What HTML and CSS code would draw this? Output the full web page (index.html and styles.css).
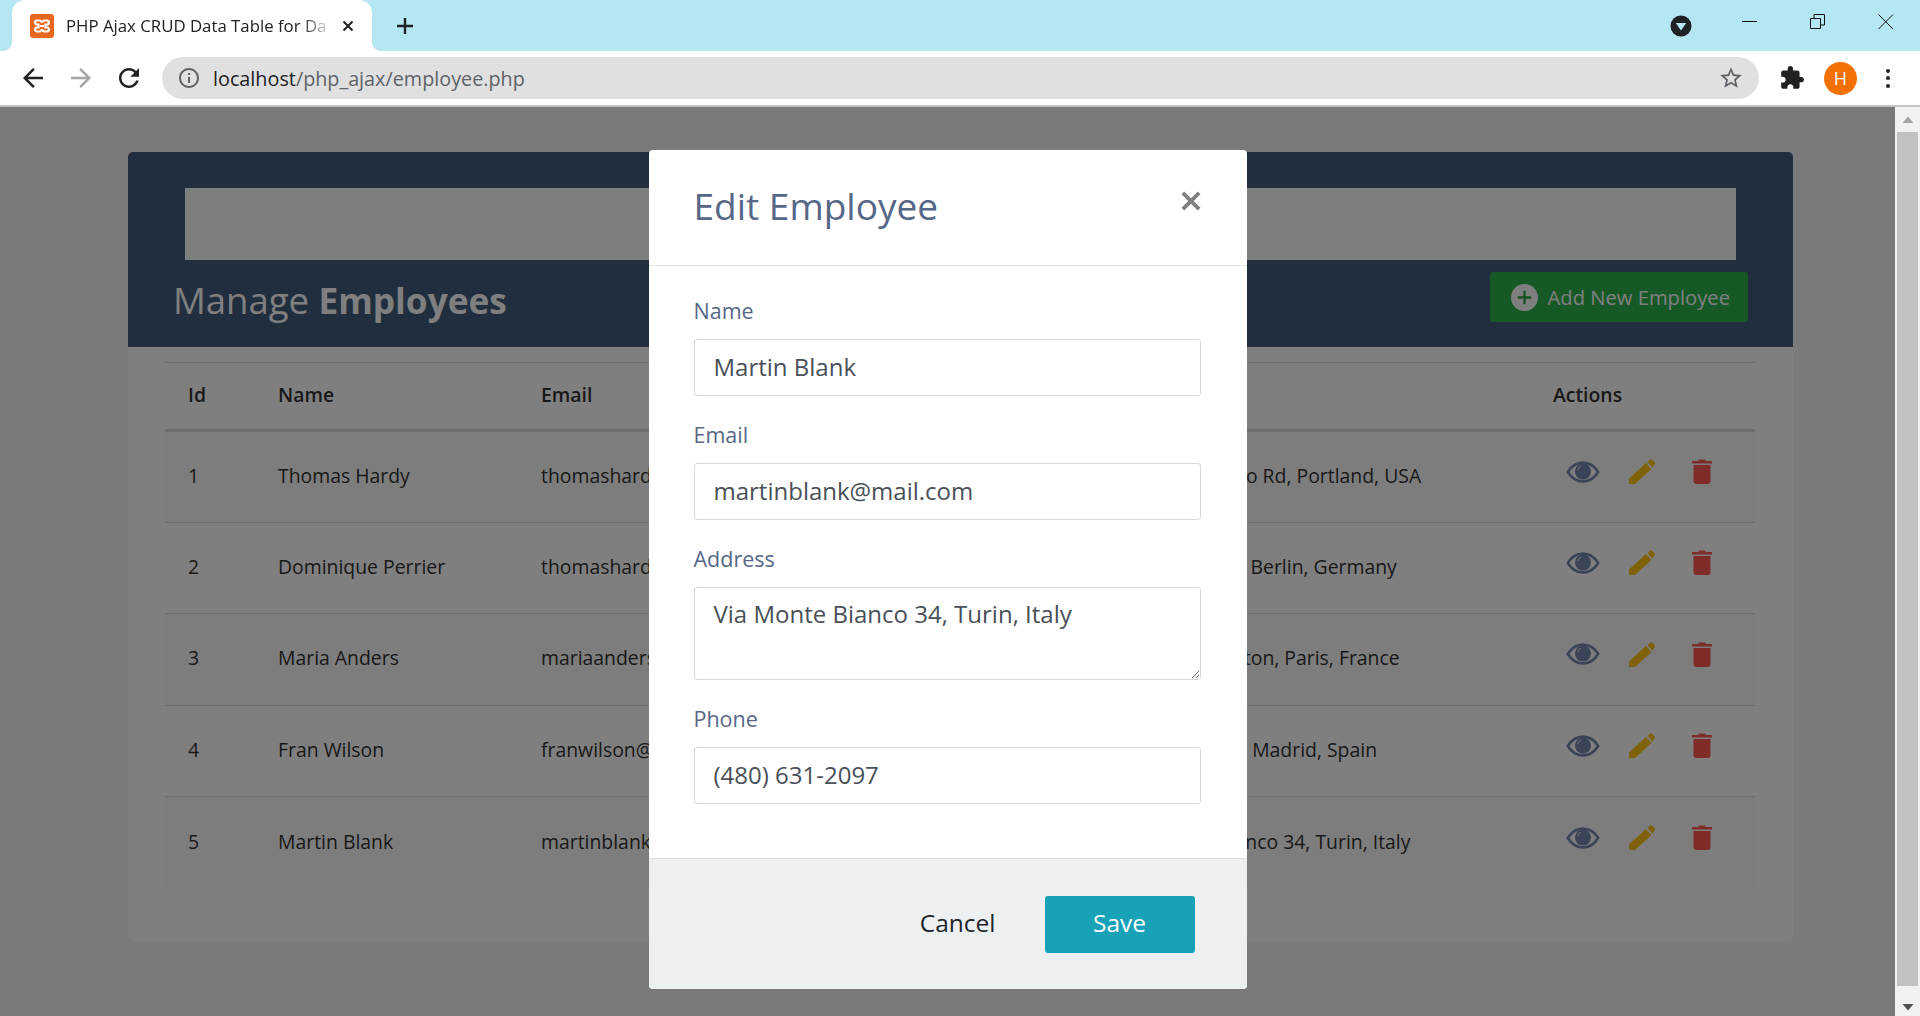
FILE: index.html
```html
<!DOCTYPE html>
<html lang="en">
  <head>
    <meta charset="utf-8" />
    <title>PHP Ajax CRUD Data Table for Database with Modal Form</title>
    <link rel="stylesheet" href="styles.css">
  </head>

  <body>
    <svg class="defs" width="0" height="0">
      <symbol id="i-eye" viewBox="0 0 34 22">
        <path d="M1.8 11C5.5 5 11 1.6 17 1.6S28.500 5 32.200 11C28.500 17 23 20.400 17 20.400S5.500 17 1.800 11Z" fill="none" stroke="currentColor" stroke-width="2.600"/>
        <circle cx="17" cy="10.500" r="8" fill="currentColor"/>
        <path d="M11.800 9.500A5.500 5.500 0 0 1 15.500 5" fill="none" stroke="#ccc" stroke-width="1.200"/>
      </symbol>
      <symbol id="i-pencil" viewBox="0 0 26 25">
        <path d="M0 25V19.500L17 4L22.500 10L6 25Z" fill="currentColor"/>
        <path d="M18.500 3L21 .7C21.800 0 22.600 0 23.300 .7L25.500 3C26.200 3.800 26.200 4.500 25.500 5.300L23.500 8.800Z" fill="currentColor"/>
      </symbol>
      <symbol id="i-trash" viewBox="0 0 20 25">
        <path d="M6.500 2C6.500 .8 7 .4 8 .4H12C13 .4 13.500 .8 13.500 2H20V4.500H0V2Z" fill="currentColor"/>
        <path d="M1.500 6H18.500V22C18.500 23.800 17.500 25 15.500 25H4.500C2.500 25 1.500 23.800 1.500 22Z" fill="currentColor"/>
      </symbol>
    </svg>

    <!-- browser frame -->
    <div class="tabstrip">
      <div class="tab">
        <svg class="favicon" viewBox="0 0 24 24">
          <rect width="24" height="24" rx="3" fill="#e8671f"/>
          <path d="M7 6.500H10C11 6.500 11 8 12 8S13 6.500 14 6.500H17C19.500 6.500 19.500 10.500 17 10.500H15.500V13.500H17C19.500 13.500 19.500 17.500 17 17.500H14C13 17.500 13 16 12 16S11 17.500 10 17.500H7C4.500 17.500 4.500 13.500 7 13.500H8.500V10.500H7C4.500 10.500 4.500 6.500 7 6.500Z" fill="none" stroke="#fff" stroke-width="2.200"/>
          <path d="M10 11H14V13H10Z" fill="#fff"/>
        </svg>
        <span class="tab-title">PHP Ajax CRUD Data Table for Da</span>
        <svg class="tab-close" viewBox="0 0 12 12"><path d="M1.500 1.500L10.500 10.500M10.500 1.500L1.500 10.500" stroke="#202124" stroke-width="2"/></svg>
      </div>
      <svg class="new-tab" viewBox="0 0 18 18"><path d="M9 1V17M1 9H17" stroke="#202124" stroke-width="2.400"/></svg>
      <svg class="tab-search" viewBox="0 0 22 22">
        <circle cx="11" cy="11" r="10.500" fill="#202124"/>
        <path d="M5.800 8H16.200L11 15.500Z" fill="#b5e7f3"/>
      </svg>
      <div class="win-btns">
        <div class="win-btn"><svg width="16" height="16" viewBox="0 0 16 16"><path d="M0 7.500H15" stroke="#111"/></svg></div>
        <div class="win-btn"><svg width="16" height="16" viewBox="0 0 16 16"><path d="M.5 4.500H10.500V14.500H.5ZM4 4.500V.5H14.500V11H10.500" fill="none" stroke="#111"/></svg></div>
        <div class="win-btn"><svg width="16" height="16" viewBox="0 0 16 16"><path d="M.5 .5L15 15M15 .5L.5 15" stroke="#111"/></svg></div>
      </div>
    </div>

    <div class="toolbar">
      <svg class="nav-icon" viewBox="0 0 24 24"><path d="M20 11H7.830l5.590-5.590L12 4l-8 8 8 8 1.410-1.410L7.830 13H20v-2z" fill="#202124"/></svg>
      <svg class="nav-icon flip" viewBox="0 0 24 24"><path d="M20 11H7.830l5.590-5.590L12 4l-8 8 8 8 1.410-1.410L7.830 13H20v-2z" fill="#a5a5a5"/></svg>
      <svg class="nav-icon" viewBox="0 0 24 24"><path d="M17.650 6.350C16.200 4.900 14.210 4 12 4c-4.420 0-7.990 3.580-7.990 8s3.570 8 7.990 8c3.730 0 6.840-2.550 7.730-6h-2.080c-.820 2.330-3.040 4-5.650 4-3.310 0-6-2.690-6-6s2.690-6 6-6c1.660 0 3.140.690 4.220 1.780L13 11h7V4l-2.350 2.350z" fill="#202124"/></svg>
      <div class="omnibox">
        <svg class="info-icon" viewBox="0 0 24 24"><path d="M11 7h2v2h-2zm0 4h2v6h-2zm1-9C6.480 2 2 6.480 2 12s4.480 10 10 10 10-4.480 10-10S17.520 2 12 2zm0 18c-4.410 0-8-3.590-8-8s3.590-8 8-8 8 3.590 8 8-3.590 8-8 8z" fill="#5f6368"/></svg>
        <span class="url"><b>localhost</b>/php_ajax/employee.php</span>
        <svg class="star-icon" viewBox="0 0 24 24"><path d="M22 9.240l-7.190-.620L12 2 9.190 8.630 2 9.240l5.460 4.730L5.820 21 12 17.270 18.180 21l-1.630-7.030L22 9.240zM12 15.400l-3.760 2.270 1-4.280-3.320-2.880 4.380-.380L12 6.100l1.710 4.040 4.380.380-3.320 2.880 1 4.280L12 15.400z" fill="#5f6368"/></svg>
      </div>
      <svg class="ext-icon" viewBox="0 0 24 24"><path d="M20.500 11H19V7c0-1.100-.9-2-2-2h-4V3.500C13 2.120 11.880 1 10.500 1S8 2.120 8 3.500V5H4c-1.100 0-1.990.9-1.990 2v3.800H3.500c1.490 0 2.700 1.210 2.700 2.700s-1.210 2.700-2.700 2.700H2V20c0 1.100.9 2 2 2h3.800v-1.500c0-1.490 1.210-2.700 2.700-2.700 1.490 0 2.700 1.210 2.700 2.700V22H17c1.100 0 2-.9 2-2v-4h1.500c1.380 0 2.500-1.120 2.500-2.500S21.880 11 20.500 11z" fill="#202124"/></svg>
      <div class="avatar">H</div>
      <div class="dots"><i></i><i></i><i></i></div>
    </div>

    <div class="viewport">
      <div class="page">
        <div class="panel">
          <div class="panel-head">
            <div class="banner"></div>
            <div class="title-row">
              <h2>Manage <b>Employees</b></h2>
              <a class="btn-add">
                <svg class="add-icon" viewBox="0 0 28 28">
                  <circle cx="14" cy="14" r="14" fill="#fff"/>
                  <path d="M14 7V21M7 14H21" stroke="#28a745" stroke-width="2.400"/>
                </svg>
                Add New Employee
              </a>
            </div>
          </div>

          <table class="emp-table">
            <colgroup>
              <col class="c-id"><col class="c-name"><col class="c-email"><col class="c-phone"><col class="c-addr"><col>
            </colgroup>
            <thead>
              <tr><th>Id</th><th>Name</th><th>Email</th><th>Phone</th><th>Address</th><th>Actions</th></tr>
            </thead>
            <tbody>
              <tr>
                <td>1</td><td>Thomas Hardy</td><td>thomashardy@mail.com</td><td>(171) 555-2222</td><td>89 Chiaroscuro Rd, Portland, USA</td>
                <td class="acts"><div class="act-row"><svg class="a-eye"><use href="#i-eye"/></svg><svg class="a-edit"><use href="#i-pencil"/></svg><svg class="a-del"><use href="#i-trash"/></svg></div></td>
              </tr>
              <tr>
                <td>2</td><td>Dominique Perrier</td><td>thomashardy@mail.com</td><td>(313) 555-5735</td><td>Obere Str. 57, Berlin, Germany</td>
                <td class="acts"><div class="act-row"><svg class="a-eye"><use href="#i-eye"/></svg><svg class="a-edit"><use href="#i-pencil"/></svg><svg class="a-del"><use href="#i-trash"/></svg></div></td>
              </tr>
              <tr>
                <td>3</td><td>Maria Anders</td><td>mariaanders@mail.com</td><td>(503) 555-9931</td><td>25, rue Lauriston, Paris, France</td>
                <td class="acts"><div class="act-row"><svg class="a-eye"><use href="#i-eye"/></svg><svg class="a-edit"><use href="#i-pencil"/></svg><svg class="a-del"><use href="#i-trash"/></svg></div></td>
              </tr>
              <tr>
                <td>4</td><td>Fran Wilson</td><td>franwilson@mail.com</td><td>(204) 619-5731</td><td>C/ Araquil, 67, Madrid, Spain</td>
                <td class="acts"><div class="act-row"><svg class="a-eye"><use href="#i-eye"/></svg><svg class="a-edit"><use href="#i-pencil"/></svg><svg class="a-del"><use href="#i-trash"/></svg></div></td>
              </tr>
              <tr>
                <td>5</td><td>Martin Blank</td><td>martinblank@mail.com</td><td>(480) 631-2097</td><td>Via Monte Bianco 34, Turin, Italy</td>
                <td class="acts"><div class="act-row"><svg class="a-eye"><use href="#i-eye"/></svg><svg class="a-edit"><use href="#i-pencil"/></svg><svg class="a-del"><use href="#i-trash"/></svg></div></td>
              </tr>
            </tbody>
          </table>
        </div>

        <!-- edit modal -->
        <div class="backdrop">
          <form class="modal">
            <div class="modal-head">
              <h4>Edit Employee</h4>
              <svg class="modal-close" viewBox="0 0 16 16"><path d="M1.500 1.500L14.500 14.500M14.500 1.500L1.500 14.500" stroke="#7f7f7f" stroke-width="3"/></svg>
            </div>
            <div class="modal-body">
              <div class="field">
                <label>Name</label>
                <input type="text" value="Martin Blank">
              </div>
              <div class="field">
                <label>Email</label>
                <input type="text" value="martinblank@mail.com">
              </div>
              <div class="field">
                <label>Address</label>
                <textarea>Via Monte Bianco 34, Turin, Italy</textarea>
              </div>
              <div class="field">
                <label>Phone</label>
                <input type="text" value="(480) 631-2097">
              </div>
            </div>
            <div class="modal-foot">
              <span class="btn-cancel">Cancel</span>
              <span class="btn-save">Save</span>
            </div>
          </form>
        </div>
      </div>

      <div class="scrollbar">
        <svg class="sb-arrow" viewBox="0 0 12 8"><path d="M6 .5L11.500 7H.5Z" fill="#a3a3a3"/></svg>
        <div class="sb-thumb"></div>
        <svg class="sb-arrow" viewBox="0 0 12 8"><path d="M6 7.500L.5 1H11.500Z" fill="#505050"/></svg>
      </div>
    </div>
  </body>
</html>
```

FILE: styles.css
```css
* {
  box-sizing: border-box;
}
html, body {
  height: 100%;
}
body {
  margin: 0;
  overflow: hidden;
  display: flex;
  flex-direction: column;
  font-family: "Open Sans", "Noto Sans", sans-serif;
  color: #333;
}
.defs {
  position: absolute;
}

/* browser frame */
.tabstrip {
  display: flex;
  align-items: center;
  height: 51px;
  padding-left: 12px;
  background: #b5e7f3;
}
.tab {
  position: relative;
  display: flex;
  align-items: center;
  align-self: stretch;
  width: 360px;
  padding: 0 18px;
  background: #fff;
  border-radius: 13px 13px 0 0;
}
.tab:before,
.tab:after {
  content: "";
  position: absolute;
  bottom: 0;
  width: 10px;
  height: 10px;
}
.tab:before {
  left: -10px;
  background: radial-gradient(circle at 0 0, #b5e7f3 10px, #fff 10.500px);
}
.tab:after {
  right: -10px;
  background: radial-gradient(circle at 100% 0, #b5e7f3 10px, #fff 10.500px);
}
.favicon {
  flex: none;
  width: 24px;
  height: 24px;
}
.tab-title {
  flex: 1;
  margin-left: 12px;
  overflow: hidden;
  white-space: nowrap;
  font-size: 16.800px;
  color: #202124;
  -webkit-mask-image: linear-gradient(to right, #000 88%, transparent 100%);
}
.tab-close {
  flex: none;
  width: 12px;
  height: 12px;
  margin-left: 9px;
}
.new-tab {
  width: 18px;
  height: 18px;
  margin-left: 24px;
}
.tab-search {
  width: 22px;
  height: 22px;
  margin-left: auto;
  margin-right: 24px;
}
.win-btns {
  display: flex;
}
.win-btn {
  display: flex;
  justify-content: center;
  align-items: center;
  width: 68px;
  height: 16px;
  margin-top: -8px;
}
.toolbar {
  display: flex;
  align-items: center;
  height: 56px;
  padding: 0 30px 0 18px;
  background: #fff;
  border-bottom: 2px solid #c4c4c4;
}
.nav-icon {
  flex: none;
  width: 30px;
  height: 30px;
  margin-right: 18px;
}
.nav-icon.flip {
  transform: scaleX(-1);
}
.omnibox {
  flex: 1;
  display: flex;
  align-items: center;
  height: 42px;
  padding: 0 15px 0 15px;
  background: #e0e0e0;
  border-radius: 21px;
}
.info-icon {
  width: 24px;
  height: 24px;
}
.url {
  flex: 1;
  margin-left: 12px;
  font-size: 19.800px;
  color: #5f6368;
}
.url b {
  font-weight: 400;
  color: #202124;
}
.star-icon {
  width: 26px;
  height: 26px;
}
.ext-icon {
  width: 26px;
  height: 26px;
  margin-left: 20px;
}
.avatar {
  width: 33px;
  height: 33px;
  margin-left: 19px;
  border-radius: 50%;
  background: #f37005;
  color: #fff;
  font-size: 18px;
  line-height: 33px;
  text-align: center;
}
.dots {
  display: flex;
  flex-direction: column;
  gap: 3.500px;
  margin-left: 29px;
}
.dots i {
  display: block;
  width: 4px;
  height: 4px;
  border-radius: 50%;
  background: #202124;
}

.viewport {
  flex: 1;
  display: flex;
  min-height: 0;
}
.scrollbar {
  flex: none;
  width: 25px;
  display: flex;
  flex-direction: column;
  align-items: center;
  padding: 9px 2px 5px;
  background: #f1f1f1;
}
.sb-arrow {
  flex: none;
  width: 12px;
  height: 8px;
}
.sb-thumb {
  flex: 1;
  align-self: stretch;
  margin: 8px 0 17px;
  background: #c1c1c1;
}

/* the page */
.page {
  flex: 1;
  position: relative;
  padding: 45px 102px 0 128px;
  background: #f5f5f5;
}
.panel {
  height: 789px;
  background: #fff;
  border-radius: 5px;
}
.panel-head {
  height: 195px;
  padding: 36px 45px 0 45px;
  background: #435d7d;
  border-radius: 5px 5px 0 0;
}
.banner {
  height: 72px;
  margin: 0 12px 12px;
  background: #fbfefb;
}
.title-row {
  display: flex;
  justify-content: space-between;
  align-items: flex-start;
}
h2 {
  margin: 8px 0 0;
  font-size: 36.500px;
  font-weight: 400;
  line-height: 40px;
  color: #fff;
}
h2 b {
  font-size: 35.200px;
  font-weight: 700;
}
.btn-add {
  display: flex;
  align-items: center;
  height: 50px;
  padding: 0 18px 0 21px;
  background: #2cb34e;
  border-radius: 3px;
  color: #fff;
  font-size: 20.200px;
}
.add-icon {
  width: 27px;
  height: 27px;
  margin-right: 10px;
}
.emp-table {
  width: 1590px;
  margin: 15px 37px 0;
  border-collapse: collapse;
  table-layout: fixed;
  font-size: 19.400px;
}
.c-id { width: 90px; }
.c-name { width: 263px; }
.c-email { width: 300px; }
.c-phone { width: 280px; }
.c-addr { width: 432px; }
th, td {
  padding: 0 23px;
  text-align: left;
  white-space: nowrap;
}
th {
  height: 68px;
  padding-bottom: 4px;
  border-top: 1px solid #ddd;
  border-bottom: 3px solid #ddd;
  font-weight: 600;
}
td {
  height: 91.500px;
  border-bottom: 1px solid #ddd;
  padding-bottom: 3px;
}
tbody tr:nth-child(odd) {
  background: #fbfbfb;
}
tbody tr:last-child td {
  border-bottom: 0;
}
.act-row {
  display: flex;
  align-items: center;
  padding-left: 13px;
  padding-bottom: 7px;
}
.a-eye {
  width: 34px;
  height: 22px;
  color: #7488ad;
  margin-right: 29px;
}
.a-edit {
  width: 26px;
  height: 25px;
  color: #ffc40f;
  margin-right: 37px;
}
.a-del {
  width: 20px;
  height: 25px;
  color: #fe5650;
}

/* modal */
.backdrop {
  position: absolute;
  top: 0;
  right: 0;
  bottom: 0;
  left: 0;
  display: flex;
  justify-content: center;
  align-items: flex-start;
  padding-top: 43px;
  background: rgba(0, 0, 0, .5);
}
.modal {
  width: 598px;
  background: #fff;
  border-radius: 4px;
  overflow: hidden;
}
.modal-head {
  display: flex;
  justify-content: space-between;
  height: 116px;
  padding: 33px 46px 0 45px;
  border-bottom: 1px solid #e3e3e3;
}
h4 {
  margin: 0;
  font-size: 37px;
  font-weight: 400;
  line-height: 46px;
  color: #566787;
}
.modal-close {
  width: 20px;
  height: 20px;
  margin-top: 8px;
}
.modal-body {
  padding: 33px 46px 27px 45px;
}
.field {
  margin-bottom: 27px;
}
.field label {
  display: block;
  height: 24px;
  margin-bottom: 16px;
  font-size: 21.500px;
  line-height: 24px;
  color: #566787;
}
.field input,
.field textarea {
  display: block;
  width: 100%;
  height: 57px;
  padding: 0 19px 2px;
  border: 1px solid #d8d8d8;
  border-radius: 3px;
  background: #fff;
  font-family: inherit;
  font-size: 24px;
  color: #495057;
  outline: none;
}
.field textarea {
  height: 93px;
  padding-top: 9px;
  resize: vertical;
}
.modal-foot {
  display: flex;
  justify-content: flex-end;
  align-items: center;
  height: 131px;
  padding: 0 52px 0 0;
  background: #ecf0f1;
  border-top: 1px solid #dee2e6;
}
.btn-cancel {
  margin-right: 49px;
  padding-bottom: 3px;
  font-size: 24.500px;
  color: #212529;
}
.btn-save {
  width: 150px;
  height: 57px;
  background: #17a2b8;
  border-radius: 3px;
  color: #fff;
  font-size: 24.500px;
  line-height: 54px;
  text-align: center;
}
```
